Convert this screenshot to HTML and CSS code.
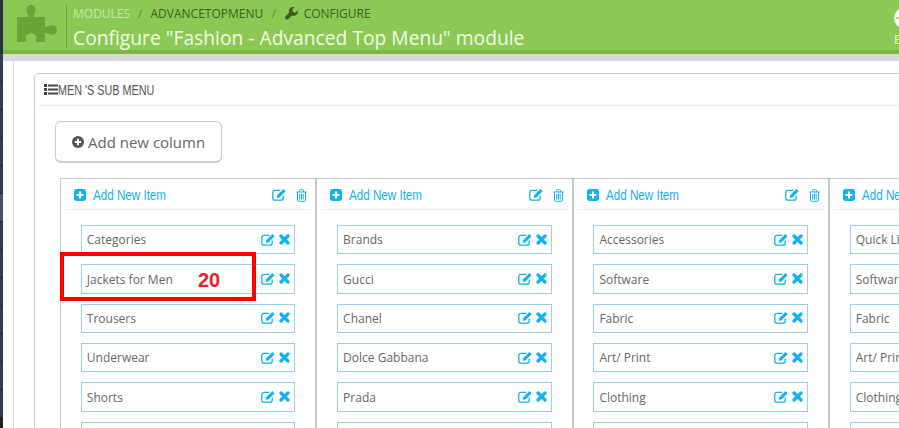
FILE: index.html
```html
<!DOCTYPE html>
<html lang="en">
<head>
    <meta charset="UTF-8">
    <title>Configure "Fashion - Advanced Top Menu" module</title>
    <link rel="stylesheet" href="styles.css">
</head>
<body>
<svg class="sprite" width="0" height="0">
    <symbol id="i-edit" viewBox="0 0 14 13">
        <path d="M11.2 7.6V10a2.2 2.2 0 0 1-2.2 2.2H3A2.2 2.2 0 0 1 .8 10V4.6A2.2 2.2 0 0 1 3 2.4h5.4" fill="none" stroke="currentColor" stroke-width="1.3"/>
        <path d="M4.8 9.8l.4-2.6L11.4 1l2.2 2.2-6.2 6.2z" fill="currentColor"/>
    </symbol>
    <symbol id="i-close" viewBox="0 0 11 11">
        <path d="M2 2l7 7M9 2l-7 7" stroke="currentColor" stroke-width="3.2" stroke-linecap="round"/>
    </symbol>
    <symbol id="i-trash" viewBox="0 0 11 13">
        <path d="M.3 3h10.4M3.5 3V1.6q0-.9.9-.9h2.2q.9 0 .9.9V3M1.5 3v8.2q0 1.1 1 1.1h6q1 0 1-1.1V3M3.8 4.8v5.8M5.5 4.8v5.8M7.2 4.8v5.8" fill="none" stroke="currentColor" stroke-width="1"/>
    </symbol>
    <symbol id="i-add" viewBox="0 0 12 12">
        <rect width="12" height="12" rx="2.4" fill="currentColor"/>
        <path d="M6 2.6v6.8M2.6 6h6.8" stroke="#fff" stroke-width="2"/>
    </symbol>
</svg>

<aside class="sidebar"></aside>

<main class="main">
    <header class="page-head">
        <svg class="puzzle" viewBox="0 0 40 37" width="40" height="37">
            <path d="M0 12H10.5C11.5 12 11.5 10 10.5 8.5C8 5 10 0 14 0C18 0 20 5 17.5 8.5C16.5 10 16.5 12 17.5 12H28V21C28 22.5 30 22 31 21.5C35 18.5 40 21 40 25C40 29 35 31.5 31 28.5C30 28 28 27.5 28 29V37H20C18 37 18.5 35 19 34C20 31 18 28.5 14 28.5C10 28.5 8 31 9 34C9.5 35 10 37 8 37H0Z" fill="#6ba339"/>
        </svg>
        <div class="head-text">
            <div class="crumbs">
                <span class="crumb-first">Modules</span>
                <span class="crumb-sep crumb-sep-first">/</span>
                <span>AdvanceTopMenu</span>
                <span class="crumb-sep">/</span>
                <svg class="wrench" viewBox="0 0 16 16" width="13" height="13">
                    <path d="M15.7 4.2L12.9 7 9.9 6.1 9 3.1 11.8.3C9.7-.4 7.3.2 5.9 1.9 4.7 3.4 4.5 5.3 5.1 7L.7 11.4C-.2 12.3-.2 13.8.7 14.8 1.7 15.7 3.2 15.7 4.1 14.8L8.7 10.6C10.6 11.3 12.7 11 14.2 9.6 15.7 8.2 16.2 6.1 15.7 4.2Z" fill="currentColor"/>
                </svg>
                <span>Configure</span>
            </div>
            <h1 class="title">Configure "Fashion - Advanced Top Menu" module</h1>
        </div>
        <div class="head-user">
            <div class="user-badge"></div>
            <div class="user-label">E</div>
        </div>
    </header>

    <div class="page">
        <div class="band"></div>
        <section class="panel">
            <div class="panel-head">
                <svg class="list-icon" viewBox="0 0 14 11" width="14" height="11">
                    <path d="M0 0h3v3H0zM0 4h3v3H0zM0 8h3v3H0zM4 .6h10v1.8H4zM4 4.6h10v1.8H4zM4 8.6h10v1.8H4z" fill="#444"/>
                </svg>
                <span class="panel-title">MEN 'S SUB MENU</span>
            </div>

            <button class="add-column">
                <svg viewBox="0 0 12 12" width="12" height="12">
                    <circle cx="6" cy="6" r="6" fill="#555"/>
                    <path d="M6 2.8v6.4M2.8 6h6.4" stroke="#fff" stroke-width="2"/>
                </svg>
                Add new column
            </button>

            <div class="columns">
                <div class="column">
                    <div class="col-head">
                        <svg class="icon-add"><use href="#i-add"/></svg>
                        <span class="add-item">Add New Item</span>
                        <svg class="icon-edit head-edit"><use href="#i-edit"/></svg>
                        <svg class="icon-trash"><use href="#i-trash"/></svg>
                    </div>
                    <div class="item"><span>Categories</span><svg class="icon-edit"><use href="#i-edit"/></svg><svg class="icon-close"><use href="#i-close"/></svg></div>
                    <div class="item"><span>Jackets for Men</span><svg class="icon-edit"><use href="#i-edit"/></svg><svg class="icon-close"><use href="#i-close"/></svg></div>
                    <div class="item"><span>Trousers</span><svg class="icon-edit"><use href="#i-edit"/></svg><svg class="icon-close"><use href="#i-close"/></svg></div>
                    <div class="item"><span>Underwear</span><svg class="icon-edit"><use href="#i-edit"/></svg><svg class="icon-close"><use href="#i-close"/></svg></div>
                    <div class="item"><span>Shorts</span><svg class="icon-edit"><use href="#i-edit"/></svg><svg class="icon-close"><use href="#i-close"/></svg></div>
                    <div class="item"></div>
                </div>
                <div class="column">
                    <div class="col-head">
                        <svg class="icon-add"><use href="#i-add"/></svg>
                        <span class="add-item">Add New Item</span>
                        <svg class="icon-edit head-edit"><use href="#i-edit"/></svg>
                        <svg class="icon-trash"><use href="#i-trash"/></svg>
                    </div>
                    <div class="item"><span>Brands</span><svg class="icon-edit"><use href="#i-edit"/></svg><svg class="icon-close"><use href="#i-close"/></svg></div>
                    <div class="item"><span>Gucci</span><svg class="icon-edit"><use href="#i-edit"/></svg><svg class="icon-close"><use href="#i-close"/></svg></div>
                    <div class="item"><span>Chanel</span><svg class="icon-edit"><use href="#i-edit"/></svg><svg class="icon-close"><use href="#i-close"/></svg></div>
                    <div class="item"><span>Dolce Gabbana</span><svg class="icon-edit"><use href="#i-edit"/></svg><svg class="icon-close"><use href="#i-close"/></svg></div>
                    <div class="item"><span>Prada</span><svg class="icon-edit"><use href="#i-edit"/></svg><svg class="icon-close"><use href="#i-close"/></svg></div>
                    <div class="item"></div>
                </div>
                <div class="column">
                    <div class="col-head">
                        <svg class="icon-add"><use href="#i-add"/></svg>
                        <span class="add-item">Add New Item</span>
                        <svg class="icon-edit head-edit"><use href="#i-edit"/></svg>
                        <svg class="icon-trash"><use href="#i-trash"/></svg>
                    </div>
                    <div class="item"><span>Accessories</span><svg class="icon-edit"><use href="#i-edit"/></svg><svg class="icon-close"><use href="#i-close"/></svg></div>
                    <div class="item"><span>Software</span><svg class="icon-edit"><use href="#i-edit"/></svg><svg class="icon-close"><use href="#i-close"/></svg></div>
                    <div class="item"><span>Fabric</span><svg class="icon-edit"><use href="#i-edit"/></svg><svg class="icon-close"><use href="#i-close"/></svg></div>
                    <div class="item"><span>Art/ Print</span><svg class="icon-edit"><use href="#i-edit"/></svg><svg class="icon-close"><use href="#i-close"/></svg></div>
                    <div class="item"><span>Clothing</span><svg class="icon-edit"><use href="#i-edit"/></svg><svg class="icon-close"><use href="#i-close"/></svg></div>
                    <div class="item"></div>
                </div>
                <div class="column">
                    <div class="col-head">
                        <svg class="icon-add"><use href="#i-add"/></svg>
                        <span class="add-item">Add New Item</span>
                        <svg class="icon-edit head-edit"><use href="#i-edit"/></svg>
                        <svg class="icon-trash"><use href="#i-trash"/></svg>
                    </div>
                    <div class="item"><span>Quick Links</span><svg class="icon-edit"><use href="#i-edit"/></svg><svg class="icon-close"><use href="#i-close"/></svg></div>
                    <div class="item"><span>Software</span><svg class="icon-edit"><use href="#i-edit"/></svg><svg class="icon-close"><use href="#i-close"/></svg></div>
                    <div class="item"><span>Fabric</span><svg class="icon-edit"><use href="#i-edit"/></svg><svg class="icon-close"><use href="#i-close"/></svg></div>
                    <div class="item"><span>Art/ Print</span><svg class="icon-edit"><use href="#i-edit"/></svg><svg class="icon-close"><use href="#i-close"/></svg></div>
                    <div class="item"><span>Clothing</span><svg class="icon-edit"><use href="#i-edit"/></svg><svg class="icon-close"><use href="#i-close"/></svg></div>
                    <div class="item"></div>
                </div>
            </div>
        </section>
    </div>
</main>

<!-- annotation drawn over the page -->
<div class="callout"><span class="callout-num">20</span></div>
</body>
</html>
```

FILE: styles.css
```css
html, body {
    height: 100%;
}
body {
    margin: 0;
    display: flex;
    overflow: hidden;
    background-color: #fff;
    font-family: "Open Sans", Arial, sans-serif;
    color: #666;
}
.sprite {
    position: absolute;
}

/* dark sidebar, only its edge is visible */
.sidebar {
    flex: 0 0 3px;
    background:
        linear-gradient(#2b3040, #2b3040) 0 0 / 3px 54px no-repeat,
        linear-gradient(#46536a, #46536a) 0 194px / 3px 27px no-repeat,
        linear-gradient(#1d2027, #1d2027) 0 418px / 3px 10px no-repeat,
        linear-gradient(#323c50 27px, #1e2636 27px) 0 -2px / 3px 28px;
}
.main {
    flex: 1;
    min-width: 0;
    display: flex;
    flex-direction: column;
}

/* green header */
.page-head {
    flex: 0 0 50px;
    display: flex;
    align-items: flex-start;
    padding-left: 14px;
    background-color: #8bc954;
    border-bottom: 4px solid #7ab743;
}
.puzzle {
    flex: none;
    margin-top: 5px;
}
.head-text {
    flex: none;
    margin: 5px 0 0 9px;
    height: 42px;
    padding-left: 6px;
    border-left: 1px solid #6ba339;
}
.crumbs {
    display: flex;
    align-items: center;
    gap: 6px;
    height: 17px;
    font-size: 12px;
    text-transform: uppercase;
    color: #3f5a25;
}
.crumb-first {
    color: #c9e6ad;
}
.crumb-sep {
    margin: 0 2.5px;
    color: #628a3c;
}
.crumb-sep-first {
    margin: 0 2px;
}
.title {
    margin: 4px 0 0;
    font-size: 19.25px;
    font-weight: 400;
    line-height: 24px;
    color: #f1fbe9;
    white-space: nowrap;
}
.head-user {
    flex: 0 0 5px;
    min-width: 0;
    margin-left: auto;
    padding-top: 8px;
}
.user-badge {
    display: flex;
    align-items: center;
    width: 20px;
    height: 20px;
    border-radius: 50%;
    background-color: #fff;
}
.user-badge::before {
    content: "";
    width: 3px;
    height: 2px;
    margin-left: 2px;
    background-color: #c9d84a;
}
.user-label {
    margin-top: 3px;
    font-size: 13px;
    line-height: 16px;
    color: #fff;
}

/* page body */
.page {
    flex: 1;
    margin-left: 10px;
    border-left: 1px solid #ddd;
}
.band {
    height: 7px;
    margin-left: -11px;
    background-color: #d8d8d8;
}
.panel {
    width: 1100px;
    margin: 12px 0 0 20px;
    border: 1px solid #ccc;
    border-radius: 5px 0 0 0;
}
.panel-head {
    display: flex;
    align-items: center;
    height: 31px;
    margin: 0 4px;
    padding-left: 5px;
    border-bottom: 1px solid #eee;
}
.panel-title {
    font-family: "Liberation Sans", sans-serif;
    font-size: 15px;
    color: #555;
    white-space: nowrap;
    transform: scaleX(.72);
    transform-origin: left center;
}
.add-column {
    display: flex;
    align-items: center;
    gap: 4px;
    height: 42px;
    margin: 15px 0 15px 20px;
    padding: 0 16px;
    background-color: #fff;
    border: 1px solid #ccc;
    border-bottom: 2px solid #ccc;
    border-radius: 6px;
    font-family: "Open Sans", Arial, sans-serif;
    font-size: 15px;
    color: #666;
}

/* menu columns */
.columns {
    display: flex;
    margin-left: 25px;
}
.column {
    flex: 0 0 256.3px;
    box-sizing: border-box;
    padding: 0 4px;
    border: 1px solid #c8c8c8;
}
.col-head {
    display: flex;
    align-items: center;
    box-sizing: border-box;
    height: 31px;
    margin-bottom: 15.2px;
    padding: 2px 4px 0 9px;
    border-bottom: 1px solid #eee;
    color: #12b2f2;
}
.add-item {
    margin: 0 0 2px 7px;
    font-family: "Liberation Sans", sans-serif;
    font-size: 15px;
    white-space: nowrap;
    transform: scaleX(.775);
    transform-origin: left center;
}
.icon-add {
    flex: none;
    width: 12px;
    height: 12px;
}
.icon-edit {
    flex: none;
    width: 14px;
    height: 13px;
    margin-bottom: 1px;
    color: #12b2f2;
}
.head-edit {
    margin-left: auto;
}
.icon-trash {
    flex: none;
    width: 11px;
    height: 13px;
    margin-left: 10px;
}
.icon-close {
    flex: none;
    width: 11px;
    height: 11px;
    margin-left: 4px;
    margin-bottom: 1px;
    color: #12b2f2;
}
.item {
    display: flex;
    align-items: center;
    box-sizing: border-box;
    height: 29.3px;
    margin: 0 16px 10px 15.8px;
    padding: 0 4px 0 5px;
    border: 1px solid #9ad0ea;
    font-size: 12px;
    color: #666;
}
.item span {
    margin-right: auto;
}

/* red annotation box */
.callout {
    position: absolute;
    left: 60px;
    top: 252px;
    box-sizing: border-box;
    width: 196px;
    height: 49px;
    padding: 12px 0 0 134px;
    border: 4px solid #f00;
}
.callout-num {
    display: block;
    font-family: "Liberation Sans", Arial, sans-serif;
    font-size: 20px;
    font-weight: 700;
    line-height: 24px;
    color: #ee1c25;
}
```
